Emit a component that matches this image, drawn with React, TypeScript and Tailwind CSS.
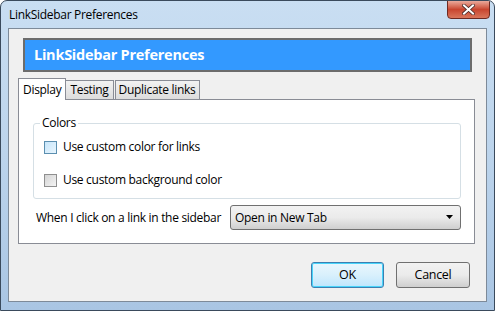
import React from 'react';

const font = { fontFamily: '"Open Sans", "Noto Sans", sans-serif' };

const Check = ({ focused }: { focused?: boolean }) => (
  <span
    className={
      'inline-block w-[13px] h-[13px] border ' +
      (focused
        ? 'border-[#5b8fb0] bg-gradient-to-br from-[#c7e6fb] to-[#e8f5fd]'
        : 'border-[#8f8f8f] bg-gradient-to-br from-[#d4d4d4] to-[#f4f4f4]')
    }
  />
);

export default function App() {
  return (
    <div
      className="w-[495px] h-[311px] overflow-hidden rounded-t-[7px] border border-[#3a4a5c] bg-gradient-to-b from-[#c9def2] via-[#bcd4ec] to-[#a9c5e3] flex flex-col text-[12px] tracking-[-0.3px] text-black"
      style={font}
    >
      {/* title bar */}
      <div className="h-[27px] flex items-start justify-between pl-[8px] pr-[4px]">
        <span className="mt-[6px] leading-[16px] text-[12px]">LinkSidebar Preferences</span>
        <div className="w-[43px] h-[19px] -mt-[1px] rounded-b-[4px] border border-[#6e2a22] bg-gradient-to-b from-[#e9a99b] via-[#c8452f] to-[#d9755b] flex items-center justify-center">
          <svg width="13" height="11" viewBox="0 0 13 11">
            <path d="M2 1.5 L11 9.5 M11 1.5 L2 9.5" stroke="#4a2a28" strokeWidth="3.6" strokeLinecap="square" />
            <path d="M2 1.5 L11 9.5 M11 1.5 L2 9.5" stroke="#ffffff" strokeWidth="2" strokeLinecap="square" />
          </svg>
        </div>
      </div>

      {/* client area */}
      <div className="mx-[7px] h-[274px] border border-[#7d8a99] bg-[#f0f0f0] flex flex-col pl-[9px] pr-[11px]">
        <div className="mt-[9px] ml-[5px] mr-[3px] h-[34px] border-2 border-[#6c6c6c] bg-[#3399ff] flex items-center pl-[9px]">
          <span className="text-white font-bold text-[14.5px] tracking-[-0.25px]">LinkSidebar Preferences</span>
        </div>

        {/* tabs */}
        <div className="mt-[5px] flex items-end h-[22px]">
          <div className="h-[22px] px-[4px] border border-b-0 border-[#898c95] bg-white flex items-center relative z-10 -mb-px">
            Display
          </div>
          <div className="h-[19px] px-[4px] border border-l-0 border-b-0 border-[#898c95] bg-gradient-to-b from-[#f2f2f2] to-[#dcdcdc] flex items-center">
            Testing
          </div>
          <div className="h-[19px] ml-[1px] px-[3px] border border-b-0 border-[#898c95] bg-gradient-to-b from-[#f2f2f2] to-[#dcdcdc] flex items-center">
            Duplicate links
          </div>
        </div>

        {/* panel */}
        <div className="h-[145px] border border-[#898c95] bg-white flex flex-col pl-[14px] pr-[13px]">
          <div className="mt-[23px] h-[76px] border border-[#d5dfe5] rounded-[3px] relative flex flex-col pl-[10px]">
            <span className="absolute -top-[9px] left-[6px] bg-white px-[2px] leading-[16px]">Colors</span>
            <label className="mt-[16px] flex items-center gap-[6px] h-[14px]">
              <Check focused />
              <span>Use custom color for links</span>
            </label>
            <label className="mt-[19px] flex items-center gap-[6px] h-[14px]">
              <Check />
              <span>Use custom background color</span>
            </label>
          </div>
          <div className="mt-[6px] flex items-center justify-between">
            <span className="pl-[3px] whitespace-nowrap">When I click on a link in the sidebar</span>
            <div className="w-[231px] h-[25px] rounded-[3px] border border-[#707070] bg-gradient-to-b from-[#f2f2f2] via-[#ebebeb] to-[#cfcfcf] flex items-center justify-between pl-[4px] pr-[6px]">
              <span>Open in New Tab</span>
              <svg width="8" height="5" viewBox="0 0 8 5">
                <path d="M0 0 H7 L3.5 4 Z" fill="#000" />
              </svg>
            </div>
          </div>
        </div>

        {/* buttons */}
        <div className="mt-[18px] flex justify-end gap-[12px] pr-[5px]">
          <button className="w-[73px] h-[26px] rounded-[3px] border border-[#3c7fb1] shadow-[inset_0_0_0_1px_#48d4fa] bg-gradient-to-b from-[#eaf6fd] via-[#d9f0fc] to-[#bee6fd] text-[12.5px]">
            OK
          </button>
          <button className="w-[74px] h-[26px] rounded-[3px] border border-[#707070] bg-gradient-to-b from-[#f2f2f2] via-[#ebebeb] to-[#cfcfcf] text-[12.5px]">
            Cancel
          </button>
        </div>
      </div>
    </div>
  );
}
